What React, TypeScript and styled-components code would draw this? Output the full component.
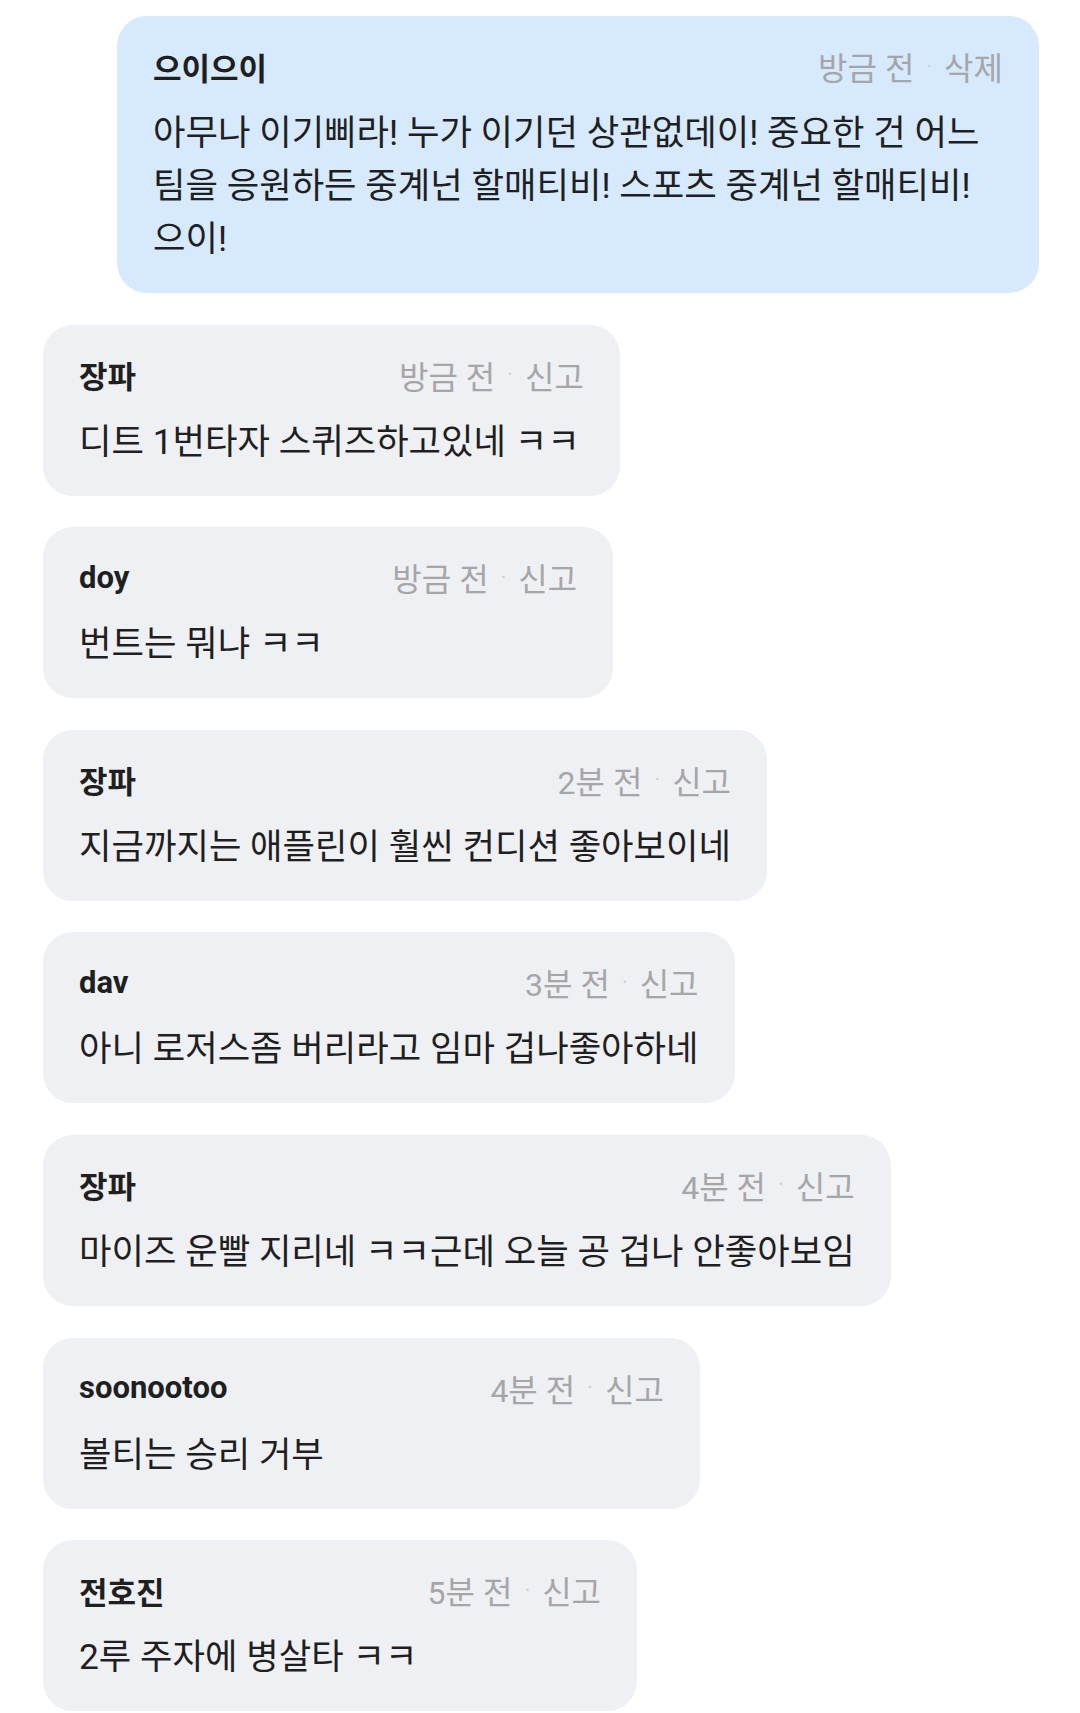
import styled, { createGlobalStyle } from 'styled-components';

interface Comment {
  id: number;
  author: string;
  time: string;
  text: string;
  mine?: boolean;
}

const COMMENTS: Comment[] = [
  {
    id: 1,
    author: '으이으이',
    time: '방금 전',
    text: '아무나 이기삐라! 누가 이기던 상관없데이! 중요한 건 어느 팀을 응원하든 중계넌 할매티비! 스포츠 중계넌 할매티비! 으이!',
    mine: true,
  },
  { id: 2, author: '장파', time: '방금 전', text: '디트 1번타자 스퀴즈하고있네 ㅋㅋ' },
  { id: 3, author: 'doy', time: '방금 전', text: '번트는 뭐냐 ㅋㅋ' },
  { id: 4, author: '장파', time: '2분 전', text: '지금까지는 애플린이 훨씬 컨디션 좋아보이네' },
  { id: 5, author: 'dav', time: '3분 전', text: '아니 로저스좀 버리라고 임마 겁나좋아하네' },
  { id: 6, author: '장파', time: '4분 전', text: '마이즈 운빨 지리네 ㅋㅋ근데 오늘 공 겁나 안좋아보임' },
  { id: 7, author: 'soonootoo', time: '4분 전', text: '볼티는 승리 거부' },
  { id: 8, author: '전호진', time: '5분 전', text: '2루 주자에 병살타 ㅋㅋ' },
];

export default function App() {
  return (
    <>
      <GlobalStyle />
      <Feed>
        {COMMENTS.map((c) => (
          <Bubble key={c.id} $mine={!!c.mine}>
            <Header>
              <Author>{c.author}</Author>
              <Meta>
                <span>{c.time}</span>
                <Dot>·</Dot>
                <span>{c.mine ? '삭제' : '신고'}</span>
              </Meta>
            </Header>
            <Body>{c.text}</Body>
          </Bubble>
        ))}
      </Feed>
    </>
  );
}

const GlobalStyle = createGlobalStyle`
  html, body {
    margin: 0;
    padding: 0;
    background: #ffffff;
  }
  body {
    font-family: Roboto, "Noto Sans CJK KR", sans-serif;
    color: #1f1f1f;
  }
`;

const Feed = styled.div`
  display: flex;
  flex-direction: column;
  gap: 31.6px;
  padding: 16px 41px 4px 43px;
`;

const Bubble = styled.div<{ $mine: boolean }>`
  display: flex;
  flex-direction: column;
  gap: 19px;
  box-sizing: border-box;
  padding: 28px 36px 27px;
  border-radius: 30px;
  background: ${(p) => (p.$mine ? '#d6e9fd' : '#eff0f4')};
  align-self: ${(p) => (p.$mine ? 'stretch' : 'flex-start')};
  margin-left: ${(p) => (p.$mine ? '74px' : '0')};
`;

const Header = styled.div`
  display: flex;
  align-items: center;
  justify-content: space-between;
  height: 44px;
`;

const Author = styled.span`
  font-size: 31px;
  font-weight: 700;
  color: #1f1f1f;
`;

const Meta = styled.span`
  display: flex;
  align-items: center;
  margin-left: 263px;
  font-size: 32px;
  color: #a6a6a8;
  white-space: nowrap;
`;

const Dot = styled.span`
  margin: 0 12px;
  color: #cfcfd3;
  font-size: 22px;
`;

const Body = styled.p`
  margin: 0;
  font-size: 35.3px;
  line-height: 53px;
  color: #1f1f1f;
`;
